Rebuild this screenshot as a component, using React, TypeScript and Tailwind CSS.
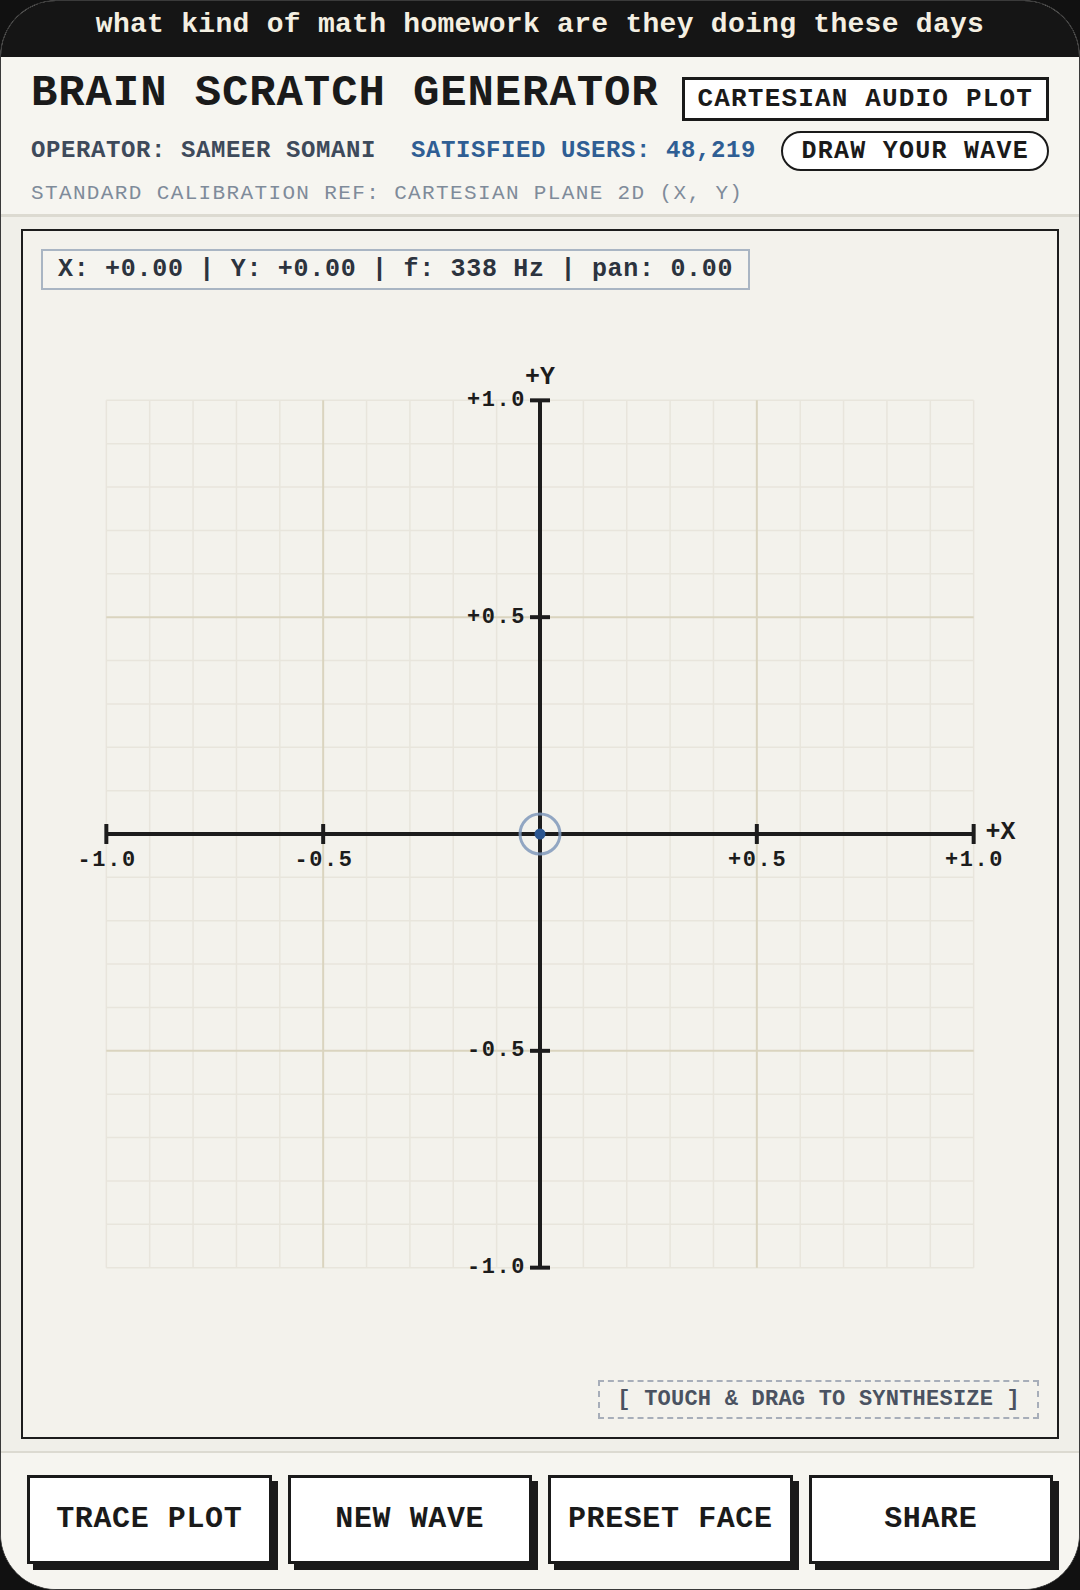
import React from 'react';

const mono = "font-['Liberation_Mono','DejaVu_Sans_Mono',monospace]";

// plot geometry, in the svg's own units (same as px)
const W = 1036;
const H = 1208;
const CX = 518;
const CY = 604;
const R = 434.5;
const STEP = R / 10;
const TICKS = [-1, -0.5, 0.5, 1];

const fmt = (v: number) => (v > 0 ? `+${v.toFixed(1)}` : v.toFixed(1));

function CartesianPlot() {
  const minor: React.ReactNode[] = [];
  const major: React.ReactNode[] = [];
  for (let i = -10; i <= 10; i++) {
    const off = i * STEP;
    const isMajor = Math.abs(i) === 5;
    const list = isMajor ? major : minor;
    const stroke = isMajor ? '#dad4bf' : '#e8e5dc';
    const sw = isMajor ? 2 : 1.5;
    list.push(
      <line key={`v${i}`} x1={CX + off} y1={CY - R} x2={CX + off} y2={CY + R} stroke={stroke} strokeWidth={sw} />,
      <line key={`h${i}`} x1={CX - R} y1={CY + off} x2={CX + R} y2={CY + off} stroke={stroke} strokeWidth={sw} />,
    );
  }

  return (
    <svg className="block h-full w-full" viewBox={`0 0 ${W} ${H}`} fontFamily="'Liberation Mono', monospace" fontWeight={700}>
      {minor}
      {major}

      {/* axes */}
      <line x1={CX - R} y1={CY} x2={CX + R} y2={CY} stroke="#1c1c1c" strokeWidth={4} />
      <line x1={CX} y1={CY - R} x2={CX} y2={CY + R} stroke="#1c1c1c" strokeWidth={4} />

      {TICKS.map((v) => (
        <g key={v}>
          <line x1={CX + v * R} y1={CY - 10} x2={CX + v * R} y2={CY + 10} stroke="#1c1c1c" strokeWidth={4} />
          <line x1={CX - 10} y1={CY - v * R} x2={CX + 10} y2={CY - v * R} stroke="#1c1c1c" strokeWidth={4} />
          <text x={CX + v * R + 0.8} y={CY + 27} textAnchor="middle" dominantBaseline="central" fontSize={22} letterSpacing={1.6} fill="#1c1c1c">
            {fmt(v)}
          </text>
          <text x={CX - 14} y={CY - v * R} textAnchor="end" dominantBaseline="central" fontSize={22} letterSpacing={1.6} fill="#1c1c1c">
            {fmt(v)}
          </text>
        </g>
      ))}

      <text x={CX + R + 12} y={CY - 2} dominantBaseline="central" fontSize={25} fill="#1c1c1c">+X</text>
      <text x={CX} y={CY - R - 23} textAnchor="middle" dominantBaseline="central" fontSize={25} fill="#1c1c1c">+Y</text>

      {/* cursor at origin */}
      <circle cx={CX} cy={CY} r={20} fill="none" stroke="#7f99bb" strokeWidth={3} opacity={0.85} />
      <circle cx={CX} cy={CY} r={5.5} fill="#2b5690" />
    </svg>
  );
}

const actions = ['TRACE PLOT', 'NEW WAVE', 'PRESET FACE', 'SHARE'];

export default function App() {
  return (
    <div className={`h-[1590px] w-[1080px] bg-[#111111] ${mono}`}>
      <div className="flex h-full flex-col overflow-hidden rounded-[56px] border border-[#3a3a3a] bg-[#f0efe9]">
        <div className="flex h-[56px] shrink-0 items-center justify-center bg-[#151515] pb-[8px] text-[28px] font-bold tracking-[0.01em] text-[#f4efe2]">
          what kind of math homework are they doing these days
        </div>

        <header className="h-[160px] shrink-0 border-b-[3px] border-[#dcdad1] bg-[#f6f5f0] px-[30px] pt-[14px]">
          <div className="flex items-start justify-between">
            <h1 className="text-[44px] font-bold leading-none tracking-[0.02em] text-[#1a1a1a]">BRAIN SCRATCH GENERATOR</h1>
            <div className="mt-[6px] flex h-[44px] items-center border-[3px] border-[#1a1a1a] bg-white px-[13px] text-[26px] font-bold leading-none tracking-[0.045em] text-[#1a1a1a]">
              CARTESIAN AUDIO PLOT
            </div>
          </div>
          <div className="mt-[10px] flex items-center justify-between">
            <div className="flex items-center gap-[35px] text-[24px] font-bold leading-none tracking-[0.025em] text-[#3e4a5b]">
              <span>OPERATOR: SAMEER SOMANI</span>
              <span className="text-[#2f5e94]">SATISFIED USERS: 48,219</span>
            </div>
            <div className="flex h-[40px] items-center rounded-full border-2 border-[#1a1a1a] bg-white px-[18px] text-[25px] font-bold leading-none tracking-[0.05em] text-[#1a1a1a]">
              DRAW YOUR WAVE
            </div>
          </div>
          <p className="mt-[12px] text-[21px] leading-none tracking-[0.065em] text-[#7f8b9a]">
            STANDARD CALIBRATION REF: CARTESIAN PLANE 2D (X, Y)
          </p>
        </header>

        <main className="flex-1 px-5 py-3">
          <div className="relative h-full border-2 border-[#1c1c1c] bg-[#f3f2ec]">
            <CartesianPlot />
            <div className="absolute left-[18px] top-[18px] flex h-[41px] items-center border-2 border-[#a9b5c3] bg-[#f5f4ef] px-[15px] text-[25px] font-bold leading-none tracking-[0.028em] text-[#2c333e]">
              X: +0.00 | Y: +0.00 | f: 338 Hz | pan: 0.00
            </div>
            <div className="absolute bottom-[18px] right-[18px] flex h-[39px] items-center border-2 border-dashed border-[#a7aeb9] px-[17px] text-[22px] font-bold leading-none tracking-[0.01em] text-[#4a5261]">
              [ TOUCH &amp; DRAG TO SYNTHESIZE ]
            </div>
          </div>
        </main>

        <footer className="h-[138px] shrink-0 border-t-2 border-[#dcdad1] bg-[#f6f5f0] px-[26px] pt-[22px]">
          <div className="grid grid-cols-4 gap-4">
            {actions.map((label) => (
              <button
                key={label}
                className="flex h-[89px] items-center justify-center border-[3px] border-[#1a1a1a] bg-white text-[30px] font-bold tracking-[0.02em] text-[#1a1a1a] shadow-[6px_6px_0_#1a1a1a]"
              >
                {label}
              </button>
            ))}
          </div>
        </footer>
      </div>
    </div>
  );
}
